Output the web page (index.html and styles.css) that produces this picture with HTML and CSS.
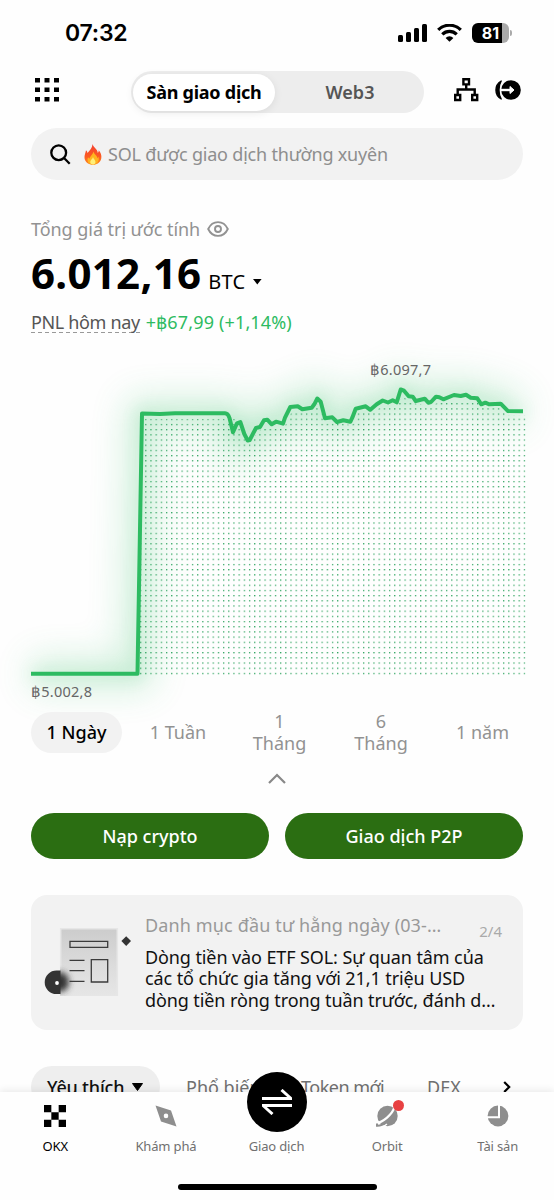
FILE: index.html
```html
<!DOCTYPE html>
<html lang="vi">
<head>
<meta charset="utf-8">
<title>OKX</title>
<link rel="stylesheet" href="styles.css">
</head>
<body>
<div class="screen">
  <div class="status">
    <span class="time">07:32</span>
    <div class="status-icons">
      <svg class="signal" width="29" height="18" viewBox="0 0 29 18"><rect x="0" y="11" width="5" height="7" rx="1.5"/><rect x="8" y="8" width="5" height="10" rx="1.5"/><rect x="16" y="4" width="5" height="14" rx="1.5"/><rect x="24" y="0" width="5" height="18" rx="1.5"/></svg>
      <svg class="wifi" width="25" height="18" viewBox="0 0 25 18"><path d="M1.2 5.9a16 16 0 0 1 22.6 0" fill="none" stroke="#000" stroke-width="3.2"/><path d="M5.3 10.3a10.2 10.2 0 0 1 14.4 0" fill="none" stroke="#000" stroke-width="3.2"/><path d="M12.5 17.8 8.6 13.9a5.6 5.6 0 0 1 7.8 0z"/></svg>
      <div class="battery"><span>81</span></div><i class="battery-tip"></i>
    </div>
  </div>

  <header class="header">
    <svg class="grid-icon" width="25" height="24" viewBox="0 0 25 24"><path d="M0 0h5v4.5H0zM9.500 0h5v4.5h-5zM19 0h5v4.5h-5zM0 9.5h5V14H0zM9.500 9.5h5V14h-5zM19 9.5h5V14h-5zM0 19h5v4.5H0zM9.500 19h5v4.5h-5zM19 19h5v4.5h-5z"/></svg>
    <div class="switch"><div class="switch-on"><span class="t-san">Sàn giao dịch</span></div><div class="switch-off">Web3</div></div>
    <svg class="tree-icon" width="25" height="24" viewBox="0 0 25 24" fill="none" stroke="#000" stroke-width="2.4"><path d="M9.4 1.2h5.6v5.2H9.4zM1.2 17h5v5h-5zM18.2 17h5v5h-5zM12.2 6.3v5M3.7 17v-5.500h17V17"/></svg>
    <svg class="login-icon" width="27" height="20" viewBox="0 0 27 20"><circle cx="17" cy="10" r="9.8"/><path d="M7.2 1C.2 5 .2 15 7.2 19 4.2 14 4.2 6 7.2 1z" stroke="#000" stroke-width="1.4" stroke-linejoin="round"/><path d="M6.5 10h12" stroke="#fff" stroke-width="2.4"/><path d="M16 6.500 20 10 16 13.500z" fill="#fff" stroke="#fff" stroke-linejoin="round"/></svg>
  </header>

  <div class="search">
    <svg class="magnifier" width="21" height="21" viewBox="0 0 21 21" fill="none" stroke="#000" stroke-width="2.3"><circle cx="8.7" cy="8.7" r="7.4"/><path d="m14 14 5.7 5.7"/></svg>
    <svg class="flame" width="18" height="21" viewBox="0 0 18 21"><defs><linearGradient id="fl" x1="0" y1="0" x2="0" y2="1"><stop offset="0" stop-color="#f4402f"/><stop offset=".6" stop-color="#fb5a22"/><stop offset="1" stop-color="#ff8f1f"/></linearGradient></defs><path fill="url(#fl)" d="M8.6 0c.5 3.2 5 5 5.200 9 .8-.7 1-1.800.9-2.700 2 2 3.100 5 2.600 8-.7 4-4 6.500-8.300 6.500S.9 18 .5 14C.2 11 1.700 8.600 2 6.200c.9.8 1.400 1.700 1.500 2.700C5.800 6.300 8.300 4 8.600 0z"/><path fill="#ffb31f" d="M9.500 7.500c.2 2.400 3.700 3.900 3.900 6.800.5-.5.8-1 .9-1.700 1.500 3.600-.5 8-5.300 8s-6.500-4-4.900-7.300c.3.7.7 1.100 1.200 1.400C6 12 9 10.700 9.500 7.500z"/><path fill="#fff07a" d="M9 13c.2 2 2.700 2.800 2.500 5.200-.2 1.600-1.300 2.300-2.700 2.300S6.200 19.500 6.200 18c0-2 2.400-2.700 2.800-5z"/></svg>
    <span class="placeholder">SOL được giao dịch thường xuyên</span>
  </div>

  <section class="balance">
    <div class="balance-label"><span class="t-total">Tổng giá trị ước tính</span>
      <svg class="eye" width="22" height="16" viewBox="0 0 22 16" fill="none" stroke="#929292" stroke-width="1.900"><path d="M1.200 8C5.500-1.200 16.500-1.200 20.800 8 16.500 17.200 5.500 17.200 1.200 8z"/><circle cx="11" cy="8" r="3"/></svg></div>
    <div class="amount"><b>6.012,16</b><span class="unit">BTC</span><svg width="9" height="6" viewBox="0 0 9 6"><path d="M0 0h8.600L4.300 5.500z"/></svg></div>
    <div class="pnl"><span class="pnl-name">PNL hôm nay</span><span class="pnl-value">+฿67,99 (+1,14%)</span></div>
  </section>

  <svg class="chart" width="554" height="360" viewBox="0 350 554 360">
    <defs>
      <filter id="wide" filterUnits="userSpaceOnUse" x="-60" y="290" width="680" height="480"><feGaussianBlur stdDeviation="18"/></filter>
      <filter id="near" filterUnits="userSpaceOnUse" x="-60" y="290" width="680" height="480"><feGaussianBlur stdDeviation="8"/></filter>
      <pattern id="dots" patternUnits="userSpaceOnUse" x="140" y="672.800" width="5.186" height="5.186"><rect width="1.250" height="1.250" fill="#2ba35d"/></pattern>
      <path id="line" d="M31 673.700H137.500L142 413.500 160 414 175 413.300H225Q228 413.300 229.500 418L233 432.300 237 423.300 240.300 422 244.300 434 247.700 440.500 249.700 440 256 428 260 427 264 420.300 267.300 419.700 271.700 424.300 276 421.700 283 423.700 285 417.700 290.300 407 297.700 406.300 302.300 409.300 311.700 407.700 314.300 404.300 317.300 398.500 320.700 401.700 325 418.300 332.300 417.300 337 422 343.300 420.300 350.300 421.800 352.300 417.700 355.700 408.700 365.700 406.300 370.300 409.800 376.700 404.300 382.700 400.500 388 402.500 392.700 400.300 396.700 402.300 400.700 389.500 404 390.700 408.700 396.300 412.700 396.700 415.700 401 424.700 398.700 428.300 402.700 431 402 436 396.700 439.300 397.300 443.300 399.300 454 395 460.700 396 466 394.700 470.700 397.700 477.300 398.300 481.300 404.300 485.300 402.700 489.300 404.300 500.700 403.700 508 411.100 523 411.300"/>
    </defs>
    <use href="#line" fill="none" stroke="#2ebd62" stroke-width="30" opacity=".22" filter="url(#wide)"/>
    <use href="#line" fill="none" stroke="#2ebd62" stroke-width="9" opacity=".18" filter="url(#near)"/>
    <path fill="url(#dots)" d="M140 675V419H236L248 443 262 428 284 428 292 411H312L318 404 324 422 352 425 358 412 372 413 384 405 398 406 402 396 412 403 430 406 440 402 458 400 478 403 482 408 500 408 508 415H525.500V675z"/>
    <use href="#line" fill="none" stroke="#2dbb61" stroke-width="4" stroke-linejoin="round"/>
    <text class="chart-text" x="370" y="374.500" textLength="61">฿6.097,7</text>
    <text class="chart-text" x="31" y="697" textLength="61">฿5.002,8</text>
  </svg>

  <div class="periods">
    <span class="period period-on">1 Ngày</span><span class="period">1 Tuần</span><span class="period">1<br>Tháng</span><span class="period">6<br>Tháng</span><span class="period">1 năm</span>
  </div>
  <div class="collapse"><svg width="18" height="11" viewBox="0 0 18 11" fill="none" stroke="#888" stroke-width="2.200"><path d="M1 10 9 2l8 8"/></svg></div>

  <div class="actions"><div class="btn"><span class="t-nap">Nạp crypto</span></div><div class="btn"><span class="t-p2p">Giao dịch P2P</span></div></div>

  <article class="news">
    <svg class="news-art" width="90" height="80" viewBox="42 922 90 80">
      <defs><linearGradient id="paper" x1="0" y1="0" x2="0" y2="1"><stop offset="0" stop-color="#ccc"/><stop offset=".6" stop-color="#ddd"/><stop offset="1" stop-color="#e6e6e6"/></linearGradient><filter id="soft" x="-50%" y="-50%" width="200%" height="200%"><feGaussianBlur stdDeviation="3"/></filter><clipPath id="sheet"><path d="M60 928h58v68H60z"/></clipPath></defs>
      <path fill="url(#paper)" d="M60 928h58v68H60z"/>
      <path fill="none" stroke="#e6e6e6" stroke-width="1.500" d="M60.700 928.700h56.600v66.600H60.700z"/>
      <g clip-path="url(#sheet)"><ellipse cx="60" cy="982" rx="9" ry="10" fill="#333" filter="url(#soft)"/></g>
      <path fill="#333" d="M60.500 970.500h-4a11.800 11.800 0 0 0 0 23.600h4z"/><circle cx="57" cy="983" r="1.900" fill="#fff"/>
      <path fill="none" stroke="#3b3b3b" stroke-width="1.300" d="M70 941.300h37.700v6H70zM91.300 959.700h16.400v22.300H91.300zM69.500 960.300h15M69.500 970.700h15M69.500 981.300h15"/>
      <path fill="#333" d="m126.200 936.300 4.800 4.800-4.800 4.800-4.800-4.800z"/>
    </svg>
    <div class="news-body">
      <div class="news-head"><span class="t-news">Danh mục đầu tư hằng ngày (03-…</span><span class="count">2/4</span></div>
      <p class="news-text">Dòng tiền vào ETF SOL: Sự quan tâm của<br>các tổ chức gia tăng với 21,1 triệu USD<br>dòng tiền ròng trong tuần trước, đánh d…</p>
    </div>
  </article>

  <div class="markets">
    <div class="market-on"><span class="t-fav">Yêu thích</span><svg width="11" height="8" viewBox="0 0 11 8"><path d="M.5.500h10l-5 7z" stroke="#000" stroke-linejoin="round"/></svg></div>
    <span class="market m-pop">Phổ biến</span><span class="market m-token">Token mới</span><span class="market m-dex">DEX</span>
    <svg class="more" width="8" height="12" viewBox="0 0 8 12" fill="none" stroke="#000" stroke-width="2.200"><path d="m1.200 1 5 5-5 5"/></svg>
  </div>

  <nav class="nav">
    <div class="nav-items">
      <div class="nav-item nav-on"><svg width="22" height="22" viewBox="0 0 21 21"><path d="M0 0h7v7H0zM14 0h7v7h-7zM7 7h7v7H7zM0 14h7v7H0zM14 14h7v7h-7z"/></svg><span>OKX</span></div>
      <div class="nav-item"><svg width="22" height="22" viewBox="0 0 22 22"><path fill="#8e8e8e" fill-rule="evenodd" d="m.500.500 15.500 5 5.500 16-15.500-5zM11 8.600a2.300 2.300 0 1 0 0 4.600 2.300 2.300 0 0 0 0-4.600z"/></svg><span>Khám phá</span></div>
      <div class="nav-item"><span class="blank"></span><span>Giao dịch</span></div>
      <div class="nav-item"><svg width="22" height="22" viewBox="0 0 22 22"><circle cx="11.500" cy="11" r="10.200" fill="#8e8e8e"/><path d="M0 17.700C6 18 16.500 9.500 18.500 2" stroke="#fff" stroke-width="2.300" fill="none"/><path d="M2 23.200C5.500 23 8.500 21 11 19" stroke="#fff" stroke-width="1.500" fill="none"/><path d="M1 18.500v2.300c3.500.2 7-1.800 10-4.300" stroke="#8e8e8e" stroke-width="2" fill="none"/></svg><i class="badge"></i><span>Orbit</span></div>
      <div class="nav-item"><svg width="22" height="22" viewBox="0 0 22 22"><circle cx="11" cy="11" r="10.400" fill="#8e8e8e"/><path d="M0 12.200h12V0" fill="none" stroke="#fff" stroke-width="2"/></svg><span>Tài sản</span></div>
    </div>
    <div class="trade"><svg width="30" height="26" viewBox="0 0 30 26" fill="none" stroke="#fff" stroke-width="3"><path d="M0 9.500h29L19.500 1M30 16.500H1L10.500 25"/></svg></div>
    <i class="home"></i>
  </nav>
</div>
</body>
</html>
```
FILE: styles.css
```css
* { box-sizing: border-box; }
body { margin: 0; background: #fff; }
.screen { position: relative; width: 554px; height: 1200px; overflow: hidden; background: #fefefe; font-family: "Noto Sans", "Open Sans", sans-serif; font-size: 18px; color: #000; white-space: nowrap; }
.screen svg { display: block; flex: none; }
.status { height: 71px; padding: 20px 42px 0 65px; display: flex; justify-content: space-between; align-items: flex-start; }
.time { font: 600 23px/27px Inter, sans-serif; letter-spacing: -.2px; }
.status-icons { display: flex; align-items: center; padding-top: 3px; }
.wifi { margin: 0 10px; }
.battery { width: 37px; height: 20px; border-radius: 6px; background: linear-gradient(90deg, #000 81%, #aaa 81%); color: #fff; font: 700 16px/20px Inter, sans-serif; text-align: center; }
.battery-tip { width: 2px; height: 6px; margin-left: 1px; border-radius: 0 2px 2px 0; background: #aaa; }
.header { height: 42px; display: flex; align-items: center; padding: 0 33px 0 35px; }
.grid-icon { margin-top: -5px; }
.switch { width: 293px; height: 42px; margin-left: 71px; border-radius: 21px; background: #ededed; display: flex; align-items: center; padding: 2px; font-weight: 700; }
.switch-on { width: 142px; height: 37px; border-radius: 19px; background: #fff; box-shadow: 0 2px 8px rgba(0,0,0,.08); text-align: center; line-height: 36px; letter-spacing: -.25px; }
.switch-off { flex: 1; padding-left: 3px; text-align: center; color: #555; font-weight: 600; }
.tree-icon { margin: -4px 0 0 30px; }
.login-icon { margin: -4px 0 0 15px; }
.search { height: 52px; margin: 15px 31px 0; border-radius: 26px; background: #f2f2f2; display: flex; align-items: center; padding-left: 19px; color: #8e8e8e; }
.placeholder { letter-spacing: -.2px; }
.flame { margin: 0 6px 0 13px; }
.balance { padding-left: 31px; }
.balance-label { height: 24px; margin-top: 37px; display: flex; align-items: center; gap: 7px; color: #929292; letter-spacing: -.05px; }
.amount { height: 50px; margin-top: 7px; display: flex; align-items: baseline; line-height: 50px; }
.amount b { font-size: 42px; font-weight: 700; letter-spacing: .3px; }
.unit { font-size: 20px; margin-left: 7px; letter-spacing: .2px; }
.amount svg { margin-left: 8px; align-self: flex-start; margin-top: 31px; }
.pnl { height: 24px; margin-top: 13px; display: flex; line-height: 22px; }
.pnl-name { color: #555; height: 22px; margin-right: 6px; letter-spacing: -.35px; background: repeating-linear-gradient(90deg, #999 0 4px, transparent 4px 7px) 0 100% / 100% 1px no-repeat; }
.pnl-value { color: #2dbb61; letter-spacing: .15px; }
.chart { margin-top: 15px; overflow: visible; }
.chart-text { font-size: 14.500px; fill: #666; }
.periods { position: relative; height: 41px; margin: 1px 31px 0; display: grid; grid-template-columns: repeat(5, 91px); column-gap: 10.500px; align-items: center; }
.period { text-align: center; color: #929292; line-height: 21.500px; }
.period-on { height: 41px; line-height: 41px; border-radius: 21px; background: #f2f2f2; color: #000; font-weight: 500; }
.collapse { height: 61px; padding-top: 21px; display: flex; justify-content: center; }
.actions { display: grid; grid-template-columns: 1fr 1fr; gap: 16px; padding: 0 31px; }
.btn { height: 46px; border-radius: 23px; background: #2b6e12; color: #fff; text-align: center; line-height: 46px; font-weight: 500; }
.news { height: 135px; margin: 36px 31px 0; padding: 18px 21px 0 11px; border-radius: 16px; background: #f2f2f2; display: flex; }
.news-art { margin-top: 9px; }
.news-body { flex: 1; margin-left: 13px; }
.news-head { height: 34px; display: flex; justify-content: space-between; color: #999; line-height: 24px; }
.t-news { letter-spacing: .14px; }
.count { font-size: 15px; line-height: 36px; color: #aaa; }
.news-text { margin: 0; line-height: 21.300px; color: #111; letter-spacing: -.1px; }
.markets { height: 42px; margin: 36px 0 0 31px; display: flex; align-items: center; color: #707070; }
.market-on { width: 129px; height: 42px; border-radius: 21px; background: #eee; color: #111; display: flex; align-items: center; padding-left: 16px; gap: 8px; font-weight: 500; letter-spacing: -.2px; }
.m-pop { width: 85px; margin-left: 26px; }
.m-token { width: 84px; margin-left: 30px; letter-spacing: -.5px; }
.m-dex { width: 35px; margin-left: 42px; }
.more { margin-left: 41px; }
.nav { position: absolute; left: 0; right: 0; bottom: 0; height: 108px; background: #fefefe; box-shadow: 0 -2px 7px rgba(0,0,0,.08); }
.nav-items { display: grid; grid-template-columns: repeat(5, 110.600px); padding-top: 13px; }
.nav-item { position: relative; display: flex; flex-direction: column; align-items: center; gap: 10px; font-size: 13px; line-height: 18px; color: #707070; letter-spacing: -.15px; }
.nav-on { color: #000; }
.blank { height: 22px; }
.badge { position: absolute; left: 61px; top: -5px; width: 11px; height: 11px; border-radius: 50%; background: #e84142; }
.trade { position: absolute; left: 247px; top: -20px; width: 60px; height: 60px; border-radius: 50%; background: #000; display: grid; place-items: center; }
.home { position: absolute; left: 178px; bottom: 10px; width: 199px; height: 6px; border-radius: 3px; background: #000; }
```
